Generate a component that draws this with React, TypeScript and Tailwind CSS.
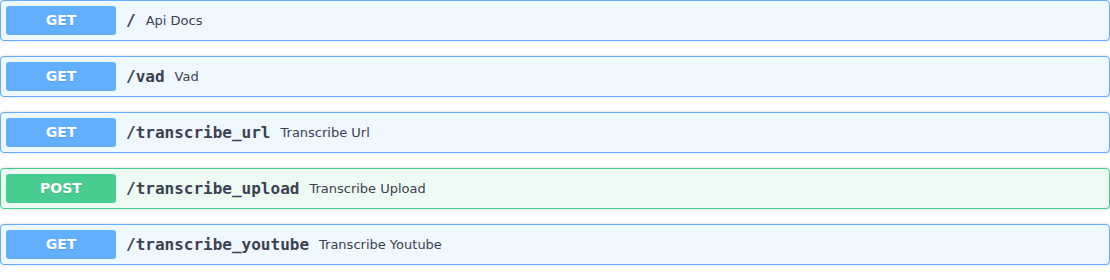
const ops = [
  { method: "GET", path: "/", summary: "Api Docs" },
  { method: "GET", path: "/vad", summary: "Vad" },
  { method: "GET", path: "/transcribe_url", summary: "Transcribe Url" },
  { method: "POST", path: "/transcribe_upload", summary: "Transcribe Upload" },
  { method: "GET", path: "/transcribe_youtube", summary: "Transcribe Youtube" },
];

function OpBlock({ method, path, summary }: { method: string; path: string; summary: string }) {
  const isPost = method === "POST";
  return (
    <div
      className={
        isPost
          ? "mb-[15px] h-[41px] rounded-[4px] border border-[#49cc90] bg-[#edfaf4] shadow-[0_0_3px_rgba(0,0,0,0.19)]"
          : "mb-[15px] h-[41px] rounded-[4px] border border-[#61affe] bg-[#eff7ff] shadow-[0_0_3px_rgba(0,0,0,0.19)]"
      }
    >
      <div className="flex h-full items-center px-[5px]">
        <span
          className={
            isPost
              ? "flex h-[29px] w-[110px] items-center justify-center rounded-[3px] bg-[#49cc90] text-[14px] font-bold text-white [text-shadow:0_1px_0_rgba(0,0,0,0.1)]"
              : "flex h-[29px] w-[110px] items-center justify-center rounded-[3px] bg-[#61affe] text-[14px] font-bold text-white [text-shadow:0_1px_0_rgba(0,0,0,0.1)]"
          }
        >
          {method}
        </span>
        <span className="px-[10px] font-['DejaVu_Sans_Mono',monospace] text-[16px] font-bold text-[#3b4151]">
          {path}
        </span>
        <span className="text-[13px] text-[#3b4151]">{summary}</span>
      </div>
    </div>
  );
}

export default function App() {
  return (
    <div className="w-[1110px] bg-white font-['DejaVu_Sans',sans-serif]">
      {ops.map((op) => (
        <OpBlock key={op.path} {...op} />
      ))}
    </div>
  );
}
